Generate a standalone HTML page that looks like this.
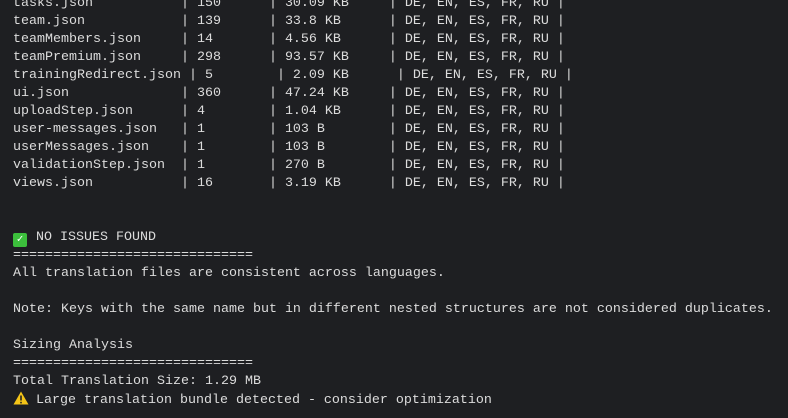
<!DOCTYPE html>
<html><head><meta charset="utf-8"><style>
html,body{margin:0;padding:0;background:#1e1f22;width:788px;height:418px;overflow:hidden}
pre{margin:0;position:absolute;left:13px;top:-5px;font-family:"Liberation Mono","DejaVu Sans Mono",monospace;font-size:13.33px;line-height:18px;color:#dcdcdc;white-space:pre}
.ok{display:inline-block;width:14px;height:14px;background:#3cbf3c;color:#fff;font-size:11px;line-height:14px;text-align:center;border-radius:2px;vertical-align:-2px;margin-right:9px;font-weight:bold}
.w{display:inline-block;width:16px;height:14px;vertical-align:-2px;margin-right:7px}
</style></head><body><pre>tasks.json           | 150      | 30.09 KB     | DE, EN, ES, FR, RU |
team.json            | 139      | 33.8 KB      | DE, EN, ES, FR, RU |
teamMembers.json     | 14       | 4.56 KB      | DE, EN, ES, FR, RU |
teamPremium.json     | 298      | 93.57 KB     | DE, EN, ES, FR, RU |
trainingRedirect.json | 5        | 2.09 KB      | DE, EN, ES, FR, RU |
ui.json              | 360      | 47.24 KB     | DE, EN, ES, FR, RU |
uploadStep.json      | 4        | 1.04 KB      | DE, EN, ES, FR, RU |
user-messages.json   | 1        | 103 B        | DE, EN, ES, FR, RU |
userMessages.json    | 1        | 103 B        | DE, EN, ES, FR, RU |
validationStep.json  | 1        | 270 B        | DE, EN, ES, FR, RU |
views.json           | 16       | 3.19 KB      | DE, EN, ES, FR, RU |


<span class="ok">✓</span>NO ISSUES FOUND
==============================
All translation files are consistent across languages.

Note: Keys with the same name but in different nested structures are not considered duplicates.

Sizing Analysis
==============================
Total Translation Size: 1.29 MB
<svg class="w" viewBox="0 0 16 14"><path d="M8 0.5 L15.5 13.5 H0.5 Z" fill="#f5c518"/><rect x="7.2" y="4.5" width="1.6" height="5" fill="#222"/><rect x="7.2" y="10.8" width="1.6" height="1.6" fill="#222"/></svg>Large translation bundle detected - consider optimization</pre></body></html>
